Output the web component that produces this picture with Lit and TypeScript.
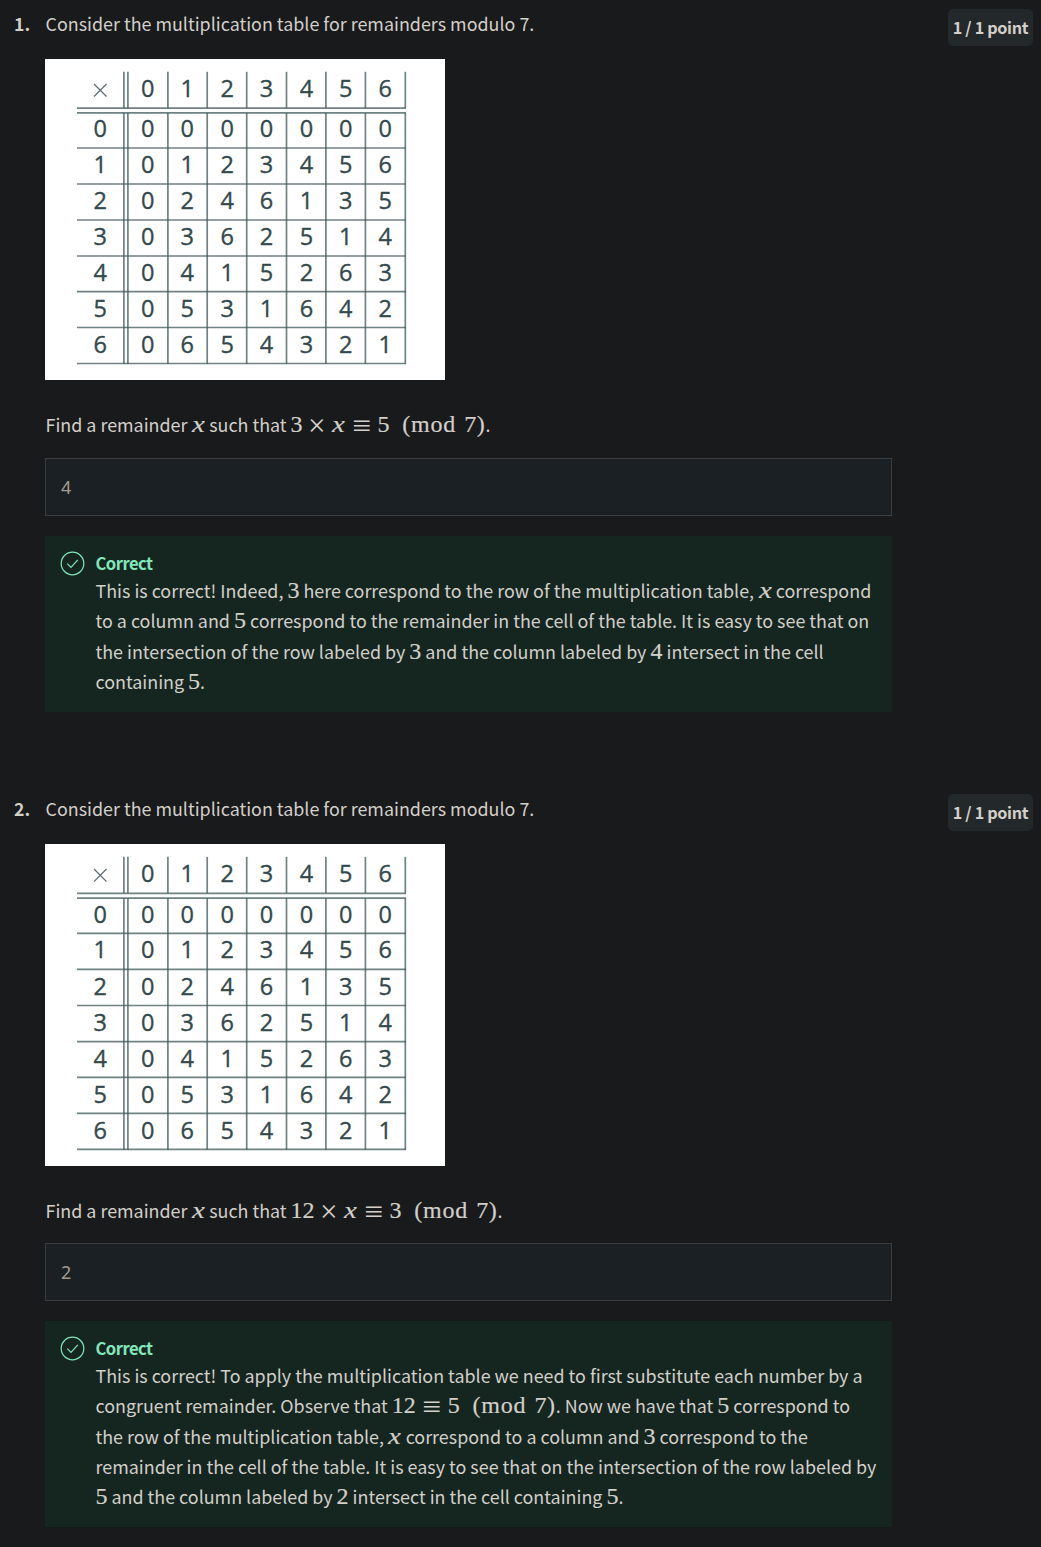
import { LitElement, html, svg, css, TemplateResult } from "lit";
import { customElement, property } from "lit/decorators.js";

const COLS = [147.7, 187.2, 227.1, 266.5, 306.4, 345.8, 385.3].map((x) => x - 45);
const V_RULES = [123.9, 127.9, 167.9, 207.2, 246.7, 286.5, 325.9, 365.4, 405.3].map((x) => x - 45);
const H_RULES = [108.2, 112.9, 148, 184, 220, 256, 291.6, 327.5, 363.5].map((y) => y - 59);
const BASELINES = [137.4, 173.1, 209.1, 245, 280.9, 316.8, 352.6].map((y) => y - 59);

const digits = [0, 1, 2, 3, 4, 5, 6];

@customElement("mod-table")
export class ModTable extends LitElement {
  static styles = css`
    :host { display: block; width: 400px; background: #fff; }
    svg { display: block; width: 100%; height: 100%; }
    line { stroke: #42585a; stroke-opacity: 0.75; stroke-width: 1.7; }
    text { font: 23.5px "Open Sans", "Noto Sans", sans-serif; fill: #34494d; stroke: #34494d; stroke-width: 0.35; text-anchor: middle; }
    .times { stroke: #5c6d70; stroke-opacity: 1; stroke-width: 1.3; }
  `;
  render() {
    return html`<svg viewBox="0 0 400 321" preserveAspectRatio="none">
      ${V_RULES.map((x) => svg`<line x1=${x} x2=${x} y1="12.8" y2="49" /><line x1=${x} x2=${x} y1="54" y2="305" />`)}
      ${H_RULES.map((y) => svg`<line x1="32" x2="361" y1=${y} y2=${y} />`)}
      <line class="times" x1="49" y1="25" x2="61.5" y2="37.5" />
      <line class="times" x1="61.5" y1="25" x2="49" y2="37.5" />
      ${digits.map((d) => svg`<text x=${COLS[d]} y="38">${d}</text>`)}
      ${digits.map(
        (r) => svg`<text x="55.2" y=${BASELINES[r]}>${r}</text>
          ${digits.map((c) => svg`<text x=${COLS[c]} y=${BASELINES[r]}>${(r * c) % 7}</text>`)}`
      )}
    </svg>`;
  }
}

const X = html`<span class="m var"><i>x</i></span>`;
const num = (n: string) => html`<span class="m">${n}</span>`;
const EQUIV = html`<span class="m rel"><b>≡</b></span>`;
const TIMES = html`<span class="m bin"><b>×</b></span>`;
const MOD7 = html`<span class="m paren open">(</span><span class="m word">mod</span><span class="m">7</span><span class="m paren">)</span>`;

@customElement("quiz-question")
export class QuizQuestion extends LitElement {
  @property() number = "";
  @property() answer = "";
  @property({ attribute: false }) prompt?: TemplateResult;
  @property({ attribute: false }) lines: TemplateResult[] = [];

  static styles = css`
    :host { display: block; color: #d3cfc9; font: 17.9px/30px "Noto Sans CJK SC", sans-serif; white-space: nowrap; }
    .row { display: flex; align-items: flex-start; height: 785px; }
    .num { width: 45px; flex: none; padding: 9px 0 0 14px; box-sizing: border-box; font-weight: 700; font-size: 17.6px; }
    .body { width: 847px; padding-top: 8px; }
    .title { height: 51px; padding-left: 0.5px; }
    .figure { height: 399px; }
    .figure mod-table { height: 321px; }
    :host([number="2"]) .figure mod-table { height: 322px; }
    .prompt { height: 30px; margin-top: 29px; padding-left: 0.5px; }
    .answer { box-sizing: border-box; height: 58px; border: 1px solid #383d3f; background: #1a2023; padding: 0 15px; line-height: 56px; font-family: "Noto Sans", sans-serif; font-size: 18px; color: #a39c91; }
    .feedback { display: flex; box-sizing: border-box; margin-top: 20px; padding: 12px 15px 16px; background: #152621; }
    .icon { width: 25px; height: 25px; margin: 3px 10px 0 0; flex: none; }
    .icon circle, .icon path { fill: none; stroke: #83e6bb; stroke-width: 1.2; }
    .correct { color: #83e6bb; font-weight: 700; font-size: 16.6px; letter-spacing: -0.52px; line-height: 30px; height: 27px; padding-left: 0.5px; }
    .line { height: 30.25px; line-height: 30.25px; padding-left: 0.5px; }
    .point { margin: 9px 8px 0 auto; width: 85px; height: 37px; line-height: 37px; border-radius: 5px; background: #23282a; text-align: center; font-weight: 700; font-size: 16.2px; letter-spacing: -0.33px; }
    .m { display: inline-block; font: 24px/24px "Liberation Serif", serif; height: 24px; -webkit-text-stroke: 0.2px currentColor; }
    .m i, .m b { display: inline-block; font-weight: 400; }
    .var { width: 13.7px; text-align: center; }
    .var i { transform: scaleX(1.2); -webkit-text-stroke-width: 0.2px; }
    .rel { width: 18.7px; margin: 0 6.7px; text-align: center; }
    .rel b { transform: translateY(2px) scale(1.4, 1.3); -webkit-text-stroke-width: 0; }
    .bin { width: 18.7px; margin: 0 5.3px; text-align: center; }
    .bin b { transform: translateY(2px) scale(1.3); -webkit-text-stroke-width: 0; }
    .paren { width: 9.3px; text-align: center; }
    .open { margin-left: 12px; }
    .word { width: 45.3px; margin-right: 8px; letter-spacing: 0.9px; }
  `;

  render() {
    return html`<div class="row">
      <div class="num">${this.number}.</div>
      <div class="body">
        <div class="title">Consider the multiplication table for remainders modulo 7.</div>
        <div class="figure">
          <mod-table></mod-table>
          <div class="prompt">Find a remainder ${X} such that ${this.prompt}.</div>
        </div>
        <div class="answer">${this.answer}</div>
        <div class="feedback">
          <svg class="icon" viewBox="0 0 25 25"><circle cx="12.5" cy="12.5" r="11.3" /><path d="M7.3 12.7 11 16.4 17.8 8.8" /></svg>
          <div>
            <div class="correct">Correct</div>
            ${this.lines.map((l) => html`<div class="line">${l}</div>`)}
          </div>
        </div>
      </div>
      <div class="point">1 / 1 point</div>
    </div>`;
  }
}

@customElement("app-root")
export class AppRoot extends LitElement {
  static styles = css`
    :host { display: block; height: 1547px; overflow: hidden; background: #191a1c; }
  `;
  render() {
    return html`
      <quiz-question
        number="1"
        answer="4"
        .prompt=${html`${num("3")}${TIMES}${X}${EQUIV}${num("5")}${MOD7}`}
        .lines=${[
          html`This is correct! Indeed, ${num("3")} here correspond to the row of the multiplication table, ${X} correspond`,
          html`to a column and ${num("5")} correspond to the remainder in the cell of the table. It is easy to see that on`,
          html`the intersection of the row labeled by ${num("3")} and the column labeled by ${num("4")} intersect in the cell`,
          html`containing ${num("5")}.`,
        ]}
      ></quiz-question>
      <quiz-question
        number="2"
        answer="2"
        .prompt=${html`${num("12")}${TIMES}${X}${EQUIV}${num("3")}${MOD7}`}
        .lines=${[
          html`This is correct! To apply the multiplication table we need to first substitute each number by a`,
          html`congruent remainder. Observe that ${num("12")}${EQUIV}${num("5")}${MOD7}. Now we have that ${num("5")} correspond to`,
          html`the row of the multiplication table, ${X} correspond to a column and ${num("3")} correspond to the`,
          html`remainder in the cell of the table. It is easy to see that on the intersection of the row labeled by`,
          html`${num("5")} and the column labeled by ${num("2")} intersect in the cell containing ${num("5")}.`,
        ]}
      ></quiz-question>
    `;
  }
}
